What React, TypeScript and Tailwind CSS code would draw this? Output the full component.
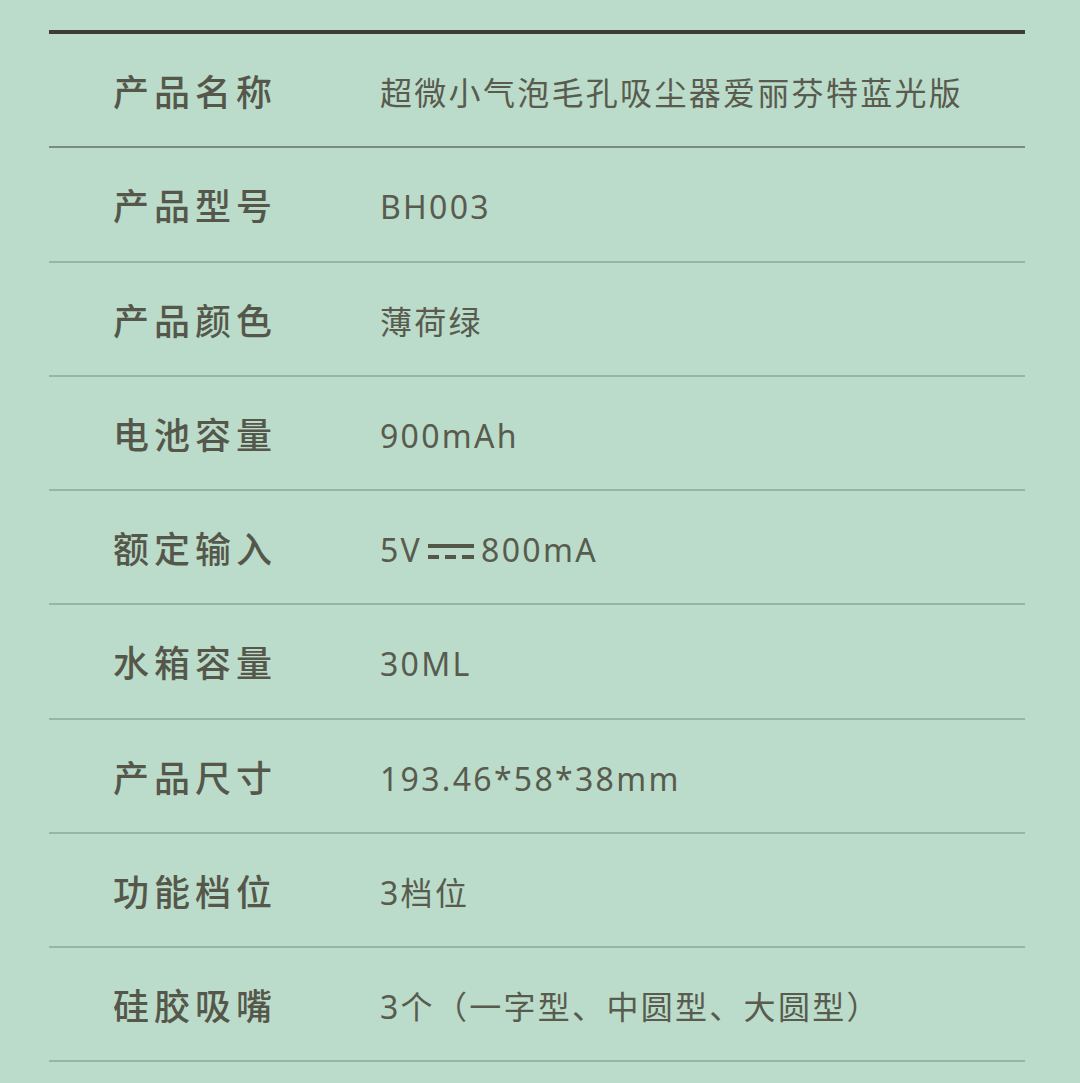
import React from 'react';

const rows: { label: string; value: React.ReactNode }[] = [
    { label: '产品名称', value: '超微小气泡毛孔吸尘器爱丽芬特蓝光版' },
    { label: '产品型号', value: 'BH003' },
    { label: '产品颜色', value: '薄荷绿' },
    { label: '电池容量', value: '900mAh' },
    {
        label: '额定输入',
        value: (
            <span className="flex items-center">
                5V
                <svg width="46" height="18" viewBox="0 0 46 18" className="ml-[6px] mr-[7px] mt-[2px]">
                    <rect x="0" y="2" width="46" height="4" fill="#545748" />
                    <rect x="0" y="13" width="11" height="4" fill="#545748" />
                    <rect x="17" y="13" width="11" height="4" fill="#545748" />
                    <rect x="34" y="13" width="12" height="4" fill="#545748" />
                </svg>
                800mA
            </span>
        ),
    },
    { label: '水箱容量', value: '30ML' },
    { label: '产品尺寸', value: '193.46*58*38mm' },
    { label: '功能档位', value: '3档位' },
    { label: '硅胶吸嘴', value: '3个（一字型、中圆型、大圆型）' },
];

export default function App() {
    return (
        <div className="w-[1080px] h-[1083px] bg-[#bbdccb] pt-[30px] overflow-hidden" style={{ fontFamily: '"Noto Sans", "Noto Sans CJK SC", sans-serif' }}>
            <div className="mx-[49px] w-[976px] border-t-[4px] border-[#3d3c39]">
                {rows.map((row, i) => (
                    <div
                        key={row.label}
                        className={`flex items-center h-[114.25px] border-b-2 ${i === 0 ? 'border-[#7d8a7c]' : 'border-[#97b5a3]'}`}
                    >
                        <div className="w-[267px] pl-[64px] shrink-0 box-content text-[36px] tracking-[5px] font-medium text-[#55574a]" style={{ fontFamily: '"Noto Sans CJK SC", sans-serif' }}>
                            {row.label}
                        </div>
                        <div className="pt-[6px] text-[32px] tracking-[2.3px] text-[#585b4d] leading-none">
                            {row.value}
                        </div>
                    </div>
                ))}
            </div>
        </div>
    );
}
